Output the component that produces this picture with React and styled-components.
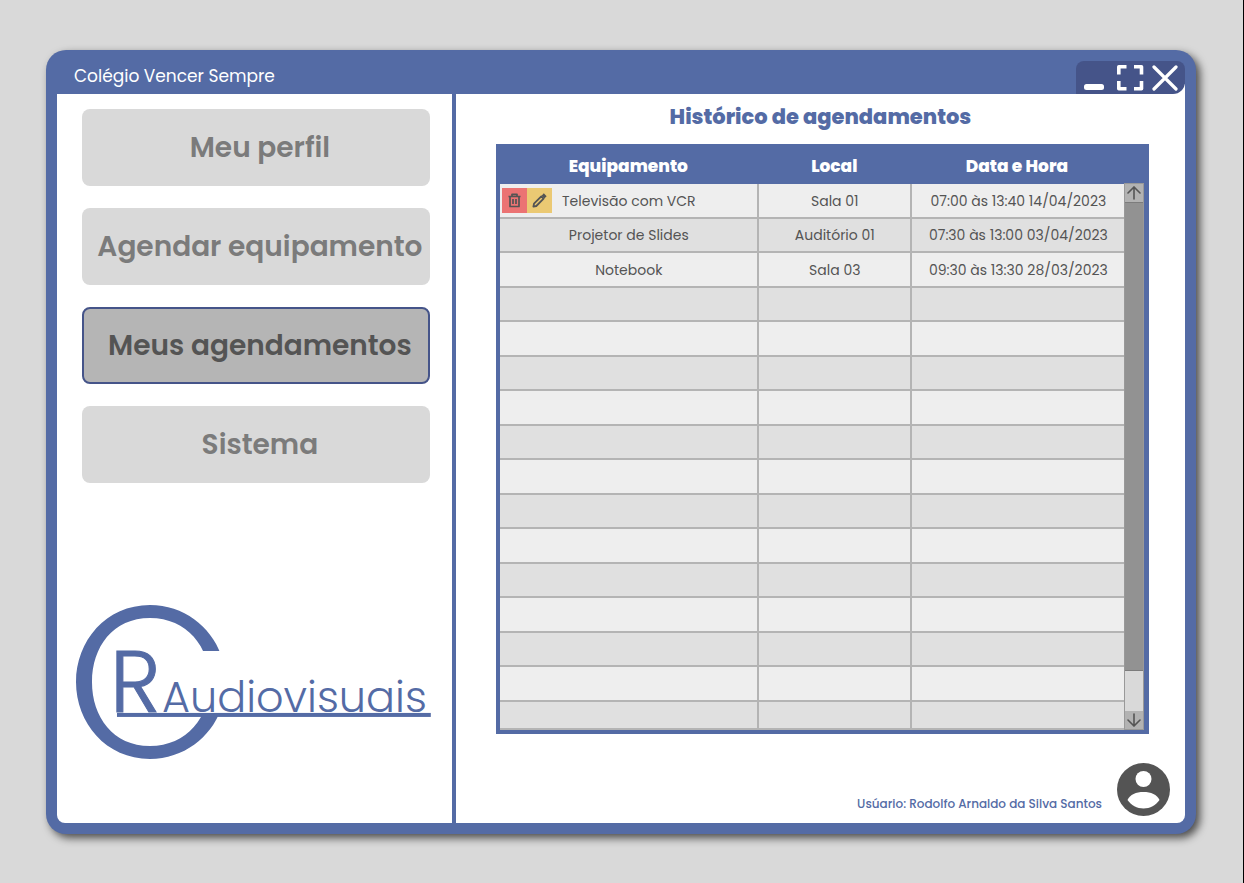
import React from "react";
import styled, { createGlobalStyle } from "styled-components";

const blue = "#546ba5";
const navy = "#455489";
const line = "#b4b4b4";
const ink = "#545454";

const GlobalStyle = createGlobalStyle`
  *, *::before, *::after { box-sizing: border-box; }
  body { margin: 0; font-family: Poppins, Inter, "Open Sans", sans-serif; }
  button { font: inherit; border: 0; padding: 0; margin: 0; background: none; cursor: pointer; }
`;

const Page = styled.div`
  min-height: 100vh;
  display: flex;
  padding: 50px 47px 49px 46px;
  background: #d9d9d9;
  border-right: 1px solid #000;
`;

const Window = styled.div`
  flex: 1;
  min-width: 0;
  display: flex;
  flex-direction: column;
  padding: 0 11px 11px;
  background: ${blue};
  border-radius: 20px;
  box-shadow: 4px 4px 8px rgba(0, 0, 0, 0.65);
`;

const TitleBar = styled.header`
  height: 44px;
  display: flex;
  justify-content: space-between;
  align-items: flex-end;
  padding-left: 17px;
`;

const AppName = styled.span`
  color: #fff;
  font-size: 17px;
  line-height: 36px;
`;

const ControlsDock = styled.div`
  background: linear-gradient(to top, #fff 10px, transparent 10px);
`;

const Controls = styled.div`
  height: 33px;
  display: flex;
  align-items: center;
  gap: 8px;
  padding: 0 6px;
  background: ${navy};
  border-radius: 8px 8px 12px 0;
`;

const ControlButton = styled.button`
  width: 27px;
  height: 28px;
  svg { display: block; }
`;

const Body = styled.div`
  flex: 1;
  display: flex;
`;

const Sidebar = styled.aside`
  width: 35%;
  display: flex;
  flex-direction: column;
  justify-content: space-between;
  padding: 15px 20px 62px 18px;
  background: #fff;
  border-radius: 0 0 0 8px;
`;

const Menu = styled.nav`
  display: flex;
  flex-direction: column;
  gap: 22px;
  padding: 0 2px 0 7px;
`;

const MenuButton = styled.button`
  && {
    height: 77px;
    padding-left: 8px;
    border-radius: 8px;
    font-size: 28px;
    font-weight: 600;
    white-space: nowrap;
    color: ${(p) => (p.$active ? ink : "#7b7b7b")};
    background: ${(p) => (p.$active ? "#b5b5b5" : "#d9d9d9")};
    border: ${(p) => (p.$active ? `2px solid ${navy}` : "0")};
  }
`;

const Logo = styled.svg`
  display: block;
  width: 100%;
  height: auto;
  fill: ${blue};
`;

const Main = styled.main`
  flex: 1;
  display: flex;
  flex-direction: column;
  margin-left: 4px;
  padding: 8px 15px 7px 40px;
  background: #fff;
  border-radius: 0 0 8px 0;
`;

const Heading = styled.h1`
  margin: 0 21px 12px 0;
  padding-right: 4px;
  font-size: 21px;
  line-height: 30px;
  font-weight: 800;
  text-align: center;
  color: ${blue};
`;

const TablePanel = styled.section`
  display: flex;
  margin-right: 21px;
  padding: 0 5px 4px 4px;
  background: ${blue};
`;

const Table = styled.table`
  flex: 1;
  table-layout: fixed;
  border-collapse: separate;
  border-spacing: 0;
`;

const HeadCell = styled.th`
  width: ${(p) => p.$width};
  height: 40px;
  padding: 4px 2px 0 0;
  font-size: 17px;
  line-height: 24px;
  font-weight: 800;
  color: #fff;
`;

const Row = styled.tr`
  height: 34px;
  background: #e0e0e0;
  &:nth-child(odd) { height: 35px; background: #eee; }
  &:last-child { height: 28px; }
`;

const Cell = styled.td`
  padding: 0 1px 0 2px;
  font-size: 14px;
  line-height: 24px;
  text-align: center;
  color: ${ink};
  border-bottom: 2px solid ${line};
  border-right: 2px solid ${line};
  &:last-child { border-right: 0; }
`;

const ActionCell = styled.div`
  display: grid;
  grid-template-columns: 1fr auto 1fr;
  align-items: center;
`;

const Actions = styled.div`
  display: flex;
`;

const ActionButton = styled.button`
  && {
    width: 25px;
    height: 25px;
    display: grid;
    place-items: center;
    background: ${(p) => p.$tone};
  }
`;

const Scrollbar = styled.div`
  width: 20px;
  margin-top: 39px;
  display: flex;
  flex-direction: column;
  background: #d9d9d9;
  border: 1px solid #999;
`;

const ScrollArrow = styled.button`
  && {
    height: 18px;
    display: grid;
    place-items: center;
    background: #b2b2b2;
  }
`;

const ScrollThumb = styled.div`
  height: 469px;
  margin-bottom: auto;
  background: #929292;
  border: solid #7c7c7c;
  border-width: 1px 0;
`;

const Footer = styled.footer`
  margin-top: auto;
  display: flex;
  justify-content: flex-end;
  align-items: flex-end;
  gap: 15px;
`;

const UserName = styled.span`
  font-size: 12px;
  line-height: 24px;
  font-weight: 500;
  color: ${blue};
`;

const Avatar = styled.svg`
  display: block;
  width: 53px;
  height: 53px;
`;

const menu = ["Meu perfil", "Agendar equipamento", "Meus agendamentos", "Sistema"];

const bookings = [
  ["Televisão com VCR", "Sala 01", "07:00 às 13:40 14/04/2023"],
  ["Projetor de Slides", "Auditório 01", "07:30 às 13:00 03/04/2023"],
  ["Notebook", "Sala 03", "09:30 às 13:30 28/03/2023"],
];
const rows = Array.from({ length: 16 }, (_, i) => bookings[i] || ["", "", ""]);

const TrashIcon = () => (
  <svg width="15" height="15" viewBox="0 0 15 15" fill="none" stroke={ink} strokeWidth="1.7">
    <path d="M1.500 3.500h12M5 3.300V1.300h5v2M3 3.500v10h9v-10M6 6v5M9 6v5" strokeLinejoin="round" />
  </svg>
);

const PencilIcon = () => (
  <svg width="15" height="15" viewBox="0 0 15 15" fill="none" stroke={ink}>
    <path d="M1.400 13.600l.6-2.900 7.300-7.300 2.300 2.300-7.300 7.300z" strokeWidth="1.800" strokeLinejoin="round" />
    <path d="M10.700 1.500l2.800 2.800" strokeWidth="3.200" />
  </svg>
);

const Arrow = ({ down }) => (
  <svg width="14" height="14" viewBox="0 0 14 14" fill="none" stroke={ink} strokeWidth="1.6" strokeLinecap="round">
    <path d={down ? "M7 1v12M1 7l6 6 6-6" : "M7 13V1M1 7l6-6 6 6"} />
  </svg>
);

export default function App() {
  return (
    <>
      <GlobalStyle />
      <Page>
        <Window>
          <TitleBar>
            <AppName>Colégio Vencer Sempre</AppName>
            <ControlsDock>
              <Controls>
                <ControlButton aria-label="Minimizar">
                  <svg width="27" height="28"><rect x="2" y="20" width="20" height="6" rx="2.500" fill="#fff" /></svg>
                </ControlButton>
                <ControlButton aria-label="Maximizar">
                  <svg width="27" height="28" fill="none" stroke="#fff" strokeWidth="3.600" strokeLinejoin="round">
                    <path d="M9.500 2.800H1.800V10.500M17 2.800h7.500V10.500M9.500 24.800H1.800V17M17 24.800h7.500V17" />
                  </svg>
                </ControlButton>
                <ControlButton aria-label="Fechar">
                  <svg width="27" height="28" stroke="#fff" strokeWidth="3.200" strokeLinecap="round">
                    <path d="M2 3l22 22M24 3l-22 22" />
                  </svg>
                </ControlButton>
              </Controls>
            </ControlsDock>
          </TitleBar>
          <Body>
            <Sidebar>
              <Menu>
                {menu.map((label) => (
                  <MenuButton key={label} $active={label === "Meus agendamentos"}>{label}</MenuButton>
                ))}
              </Menu>
              <Logo viewBox="0 0 357 158" role="img" aria-label="CR Audiovisuais">
                <clipPath id="ring-opening">
                  <path d="M0 0H146V48H125L100 79L125 110H146V158H0Z" />
                </clipPath>
                <path
                  clipPath="url(#ring-opening)"
                  fillRule="evenodd"
                  d="M75 2C119 2 151 38 151 79S119 156 75 156S1 120 1 79S31 2 75 2ZM75 15C38 15 17 44 17 79S38 143 75 143S135 114 135 79S112 15 75 15Z"
                />
                <text x="35" y="109" fontSize="86" fontWeight="300" stroke={blue} strokeWidth="1">R</text>
                <text x="87" y="109" fontSize="43" fontWeight="300">Audiovisuais</text>
                <rect x="42" y="110" width="314" height="4" />
              </Logo>
            </Sidebar>
            <Main>
              <Heading>Histórico de agendamentos</Heading>
              <TablePanel>
                <Table>
                  <thead>
                    <tr>
                      <HeadCell $width="41.5%">Equipamento</HeadCell>
                      <HeadCell $width="24.5%">Local</HeadCell>
                      <HeadCell $width="34%">Data e Hora</HeadCell>
                    </tr>
                  </thead>
                  <tbody>
                    {rows.map(([item, place, when], i) => (
                      <Row key={i}>
                        <Cell>
                          {i === 0 ? (
                            <ActionCell>
                              <Actions>
                                <ActionButton $tone="#eb7373" aria-label="Excluir"><TrashIcon /></ActionButton>
                                <ActionButton $tone="#ebc973" aria-label="Editar"><PencilIcon /></ActionButton>
                              </Actions>
                              {item}
                            </ActionCell>
                          ) : item}
                        </Cell>
                        <Cell>{place}</Cell>
                        <Cell>{when}</Cell>
                      </Row>
                    ))}
                  </tbody>
                </Table>
                <Scrollbar>
                  <ScrollArrow aria-label="Rolar para cima"><Arrow /></ScrollArrow>
                  <ScrollThumb />
                  <ScrollArrow aria-label="Rolar para baixo"><Arrow down /></ScrollArrow>
                </Scrollbar>
              </TablePanel>
              <Footer>
                <UserName>Usúario: Rodolfo Arnaldo da Silva Santos</UserName>
                <Avatar viewBox="0 0 53 53" aria-hidden="true">
                  <circle cx="26.5" cy="26.5" r="26.5" fill={ink} />
                  <circle cx="26.5" cy="16" r="8" fill="#fff" />
                  <path d="M10.500 37C13 31.500 19 29 26.500 29S40 31.500 42.500 37C39 42 33 45.500 26.500 45.500S14 42 10.500 37Z" fill="#fff" />
                </Avatar>
              </Footer>
            </Main>
          </Body>
        </Window>
      </Page>
    </>
  );
}
